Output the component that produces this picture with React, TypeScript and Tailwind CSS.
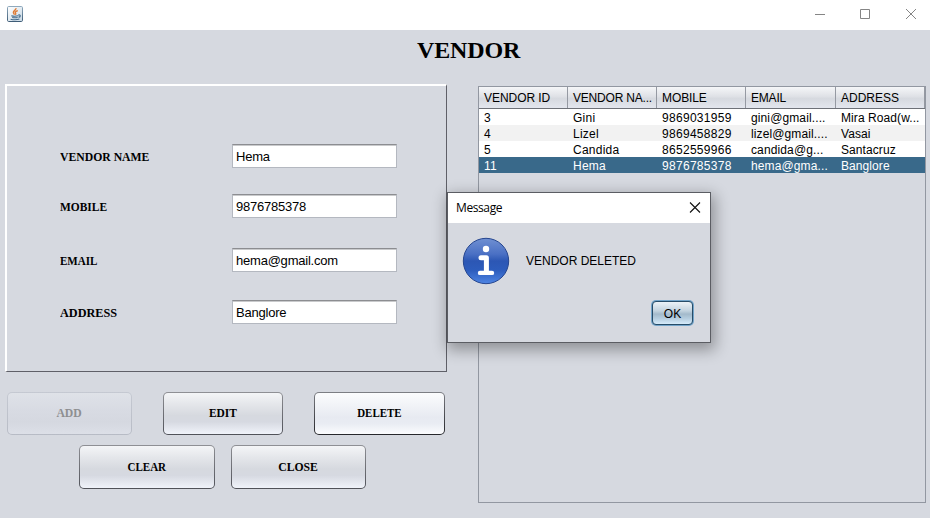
import React from "react";

const columns = [
  { label: "VENDOR ID", width: "w-[89px]", track: "tracking-[-0.05px]" },
  { label: "VENDOR NA...", width: "w-[89px]", track: "tracking-[-0.2px]" },
  { label: "MOBILE", width: "w-[89px]", track: "tracking-[-0.1px]" },
  { label: "EMAIL", width: "w-[90px]", track: "tracking-[-0.2px]" },
  { label: "ADDRESS", width: "w-[89px]", track: "tracking-normal" },
];

const rows = [
  { tone: "bg-white text-black", cells: ["3", "Gini", "9869031959", "gini@gmail....", "Mira Road(w..."] },
  { tone: "bg-[#f2f2f2] text-black", cells: ["4", "Lizel", "9869458829", "lizel@gmail....", "Vasai"] },
  { tone: "bg-white text-black", cells: ["5", "Candida", "8652559966", "candida@g...", "Santacruz"] },
  { tone: "bg-[#39698a] text-white", cells: ["11", "Hema", "9876785378", "hema@gma...", "Banglore"] },
];

const cellTracking = ["tracking-[0.25px]", "tracking-[0.25px]", "tracking-[0.3px]", "tracking-[0.12px]", "tracking-[0.08px]"];

const fields = [
  { label: "VENDOR NAME", value: "Hema", gap: "mt-[58px]", squeeze: "scale-x-[0.9]" },
  { label: "MOBILE", value: "9876785378", gap: "mt-[26px]", squeeze: "scale-x-[0.88]" },
  { label: "EMAIL", value: "hema@gmail.com", gap: "mt-[30px]", squeeze: "scale-x-[0.85]" },
  { label: "ADDRESS", value: "Banglore", gap: "mt-[28px]", squeeze: "scale-x-[0.94]" },
];

function JavaIcon() {
  return (
    <svg width="16" height="16" viewBox="0 0 16 16" fill="none">
      <defs>
        <linearGradient id="javaFrame" x1="0" y1="0" x2="0" y2="1">
          <stop offset="0" stopColor="#8fa9bd" />
          <stop offset="1" stopColor="#3f5d77" />
        </linearGradient>
        <linearGradient id="javaFill" x1="0" y1="0" x2="1" y2="1">
          <stop offset="0" stopColor="#ffffff" />
          <stop offset="1" stopColor="#c9d9e5" />
        </linearGradient>
      </defs>
      <rect x="0.5" y="0.5" width="15" height="15" rx="1.2" fill="url(#javaFill)" stroke="url(#javaFrame)" />
      <path d="M9 2.2C9.3 4 6 4.8 6.4 6.6c.1.7.8 1.2 1 2M10.8 4.6C9 5.2 7.6 6.2 8.6 7.3c.5.6.2 1-.3 1.5" stroke="#df7b35" strokeWidth="1.4" />
      <path d="M4.3 9.8c2 .6 5 .5 7 0M5.2 11.4c1.6.5 3.8.5 5.4 0M3.6 13.2c3 .8 6.5.7 8.8-.1M11.3 9c2.4-.6 2.7 1.7.3 2.4" stroke="#42698a" strokeWidth="1.1" />
    </svg>
  );
}

function InfoIcon() {
  return (
    <svg width="48" height="48" viewBox="0 0 48 48">
      <defs>
        <linearGradient id="infoBlue" x1="0" y1="0" x2="0" y2="1">
          <stop offset="0" stopColor="#7090d2" />
          <stop offset="0.35" stopColor="#4a70c4" />
          <stop offset="0.5" stopColor="#2c57b4" />
          <stop offset="0.7" stopColor="#2d5cbc" />
          <stop offset="1" stopColor="#4e85e4" />
        </linearGradient>
      </defs>
      <circle cx="24" cy="24" r="22.7" fill="url(#infoBlue)" stroke="#26468f" strokeWidth="1" />
      <circle cx="24" cy="12" r="3.2" fill="#fff" />
      <path d="M19 20.8h5.4V34" fill="none" stroke="#fff" strokeWidth="5" strokeLinejoin="round" strokeLinecap="round" />
      <path d="M18 35.9h12" fill="none" stroke="#fff" strokeWidth="4.4" strokeLinecap="round" />
    </svg>
  );
}

type ActionButtonProps = {
  label: string;
  className: string;
  squeeze: string;
  tone?: "normal" | "hover" | "disabled";
};

function ActionButton({ label, className, squeeze, tone = "normal" }: ActionButtonProps) {
  const frames = {
    normal: "from-[#8f9095] to-[#505259] text-black",
    hover: "from-[#7d7f85] to-[#26272b] text-black",
    disabled: "from-[#c5c9d2] to-[#b7bbc5] text-[#8e8f91]",
  };
  const faces = {
    normal: "bg-[linear-gradient(180deg,#f4f5f7_0%,#e4e6ea_28%,#d6d9df_55%,#d6d9e1_70%,#f0f3fa_100%)]",
    hover: "bg-[linear-gradient(180deg,#fbfcfd_0%,#f1f3f7_30%,#e7eaf1_60%,#e9ecf3_75%,#fbfcfe_100%)]",
    disabled: "bg-[linear-gradient(180deg,#dfe2e8_0%,#d8dbe3_40%,#d5d8e0_70%,#dcdfe7_100%)]",
  };
  return (
    <button className={`rounded-[5px] bg-linear-to-b p-px ${frames[tone]} ${className}`}>
      <span className={`flex h-full w-full items-center justify-center rounded-[4px] pb-px font-['Liberation_Serif',serif] text-[13px] leading-4 font-bold ${faces[tone]}`}>
        <span className={squeeze}>{label}</span>
      </span>
    </button>
  );
}

function VendorForm() {
  return (
    <section className="h-[288px] w-[442px] border-t-2 border-r border-b border-l-2 border-t-white border-r-[#5f6068] border-b-[#5f6068] border-l-white pl-[53px]">
      {fields.map((field) => (
        <div key={field.label} className={`flex h-6 items-center ${field.gap}`}>
          <label className="w-[172px] pt-[2px] font-['Liberation_Serif',serif] text-[13px] font-bold">
            <span className={`inline-block origin-left ${field.squeeze}`}>{field.label}</span>
          </label>
          <div className="flex h-6 w-[165px] items-center border border-t-[#8c8d91] border-r-[#b4b8c0] border-b-[#b4b8c0] border-l-[#b4b8c0] bg-white pt-px pl-[3px] text-[13px] tracking-[-0.22px] shadow-[inset_0_1px_0_#c9cacc]">
            {field.value}
          </div>
        </div>
      ))}
    </section>
  );
}

function VendorTable() {
  return (
    <section className="h-[417px] w-[448px] border border-[#9297a1] text-[12px]">
      <div className="flex h-[22px] border-b border-[#6e7178] bg-[linear-gradient(180deg,#f5f6f8_0%,#dfe1e6_45%,#d6d9df_55%,#e3e6ee_100%)]">
        {columns.map((column) => (
          <div key={column.label} className={`flex items-center border-r border-[#9599a2] pl-[5px] whitespace-nowrap ${column.width} ${column.track}`}>
            {column.label}
          </div>
        ))}
      </div>
      {rows.map((row) => (
        <div key={row.cells[0]} className={`flex h-4 ${row.tone}`}>
          {row.cells.map((cell, index) => (
            <div key={cell} className={`pl-[5px] leading-[18px] whitespace-nowrap ${cellTracking[index]} ${columns[index].width}`}>
              {cell}
            </div>
          ))}
        </div>
      ))}
    </section>
  );
}

function MessageDialog() {
  return (
    <div className="absolute top-[192px] left-[447px] flex h-[151px] w-[264px] flex-col border border-[#5b5d63] bg-[#d6d9e0] shadow-[2px_5px_14px_2px_rgba(0,0,0,0.33)]">
      <div className="flex h-[30px] items-center justify-between bg-white pr-[9px] pl-2 font-['Open_Sans',sans-serif] text-[12px] tracking-[-0.4px]">
        <span>Message</span>
        <svg width="12" height="12" viewBox="0 0 12 12" stroke="#111" strokeWidth="1.1">
          <path d="M1 .5l10 10M11 .5L1 10.5" />
        </svg>
      </div>
      <div className="flex items-center pt-[14px] pl-[14px]">
        <InfoIcon />
        <span className="ml-4 text-[12px]">VENDOR DELETED</span>
      </div>
      <button className="mt-[15px] ml-[203px] h-[26px] w-[43px] rounded-[5px] bg-[#73a4c9] p-px">
        <span className="flex h-full w-full items-center justify-center rounded-[4px] border border-[#274c68] bg-[linear-gradient(180deg,#ecf2f7_0%,#c3d3df_40%,#a3bacb_55%,#b5cddf_75%,#d5ebfa_100%)] pt-px text-[12px]">
          OK
        </span>
      </button>
    </div>
  );
}

export default function App() {
  return (
    <div className="relative flex h-[518px] w-[930px] flex-col overflow-hidden bg-[#d6d9e0] font-['Liberation_Sans',Arial,sans-serif] text-black">
      <header className="flex h-[30px] items-center justify-between bg-white pt-px pr-[13px] pb-[3px] pl-[7px]">
        <JavaIcon />
        <svg width="103" height="12" viewBox="0 0 103 12" fill="none" stroke="#858585">
          <path d="M1 6.5h10M46.5 1.5h9v9h-9zM92 1l10 10M102 1L92 11" />
        </svg>
      </header>
      <h1 className="mt-[5px] ml-[417px] h-[30px] font-['Liberation_Serif',serif] text-[24px] leading-[30px] font-bold tracking-[-0.15px]">VENDOR</h1>
      <main className="flex pl-[5px]">
        <div className="mt-[19px] w-[442px]">
          <VendorForm />
          <div className="mt-5 flex pl-[2px]">
            <ActionButton label="ADD" tone="disabled" squeeze="scale-x-[0.9]" className="h-[43px] w-[125px]" />
            <ActionButton label="EDIT" squeeze="scale-x-[0.88]" className="ml-[31px] h-[43px] w-[120px]" />
            <ActionButton label="DELETE" tone="hover" squeeze="scale-x-[0.84]" className="ml-[31px] h-[43px] w-[131px]" />
          </div>
          <div className="mt-[10px] flex gap-4 pl-[74px]">
            <ActionButton label="CLEAR" squeeze="scale-x-[0.85]" className="h-11 w-[136px]" />
            <ActionButton label="CLOSE" squeeze="scale-x-[0.9]" className="h-11 w-[135px]" />
          </div>
        </div>
        <div className="mt-[21px] ml-[31px]">
          <VendorTable />
        </div>
      </main>
      <MessageDialog />
    </div>
  );
}
